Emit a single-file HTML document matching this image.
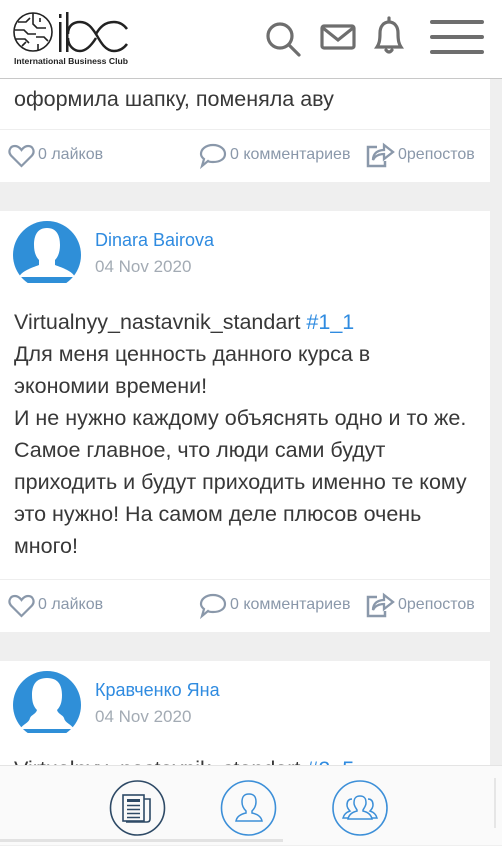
<!DOCTYPE html>
<html><head><meta charset="utf-8"><style>
*{margin:0;padding:0;box-sizing:border-box}
body{width:502px;height:845px;overflow:hidden;background:#efefef;font-family:"Liberation Sans",sans-serif;position:relative}
.hdr{position:absolute;left:0;top:0;width:502px;height:79px;background:#fff;border-bottom:1px solid #c8c8c8}
.card{position:absolute;left:0;width:490px;background:#fff}
.txt{position:absolute;left:14px;font-size:21.5px;color:#383838;line-height:32px;white-space:nowrap}
.act{position:absolute;left:0;width:490px;height:52px;border-top:1px solid #eee;font-size:16px;color:#8a98aa}
.act span{position:absolute;top:16px}
.act svg{position:absolute}
.name{position:absolute;left:95px;font-size:18px;color:#2f8be0}
.date{position:absolute;left:95px;font-size:17px;color:#a3abb4}
.av{position:absolute;left:13px;width:68px;height:62px;overflow:hidden}
.blue{color:#2f8be0}
</style></head><body>

<div class="card" style="top:79px;height:103px">
  <div class="txt" style="top:4px">оформила шапку, поменяла аву</div>
  <div class="act" style="top:50px">
    <svg style="left:8px;top:14px" width="27" height="24" viewBox="0 0 27 24"><path d="M13.5 22 L3 11.5 C0 8 1.5 2 7 2 C10 2 12 4 13.5 6 C15 4 17 2 20 2 C25.5 2 27 8 24 11.5 Z" fill="none" stroke="#8a98aa" stroke-width="2.2"/></svg>
    <span style="left:38px">0 лайков</span>
    <svg style="left:199px;top:13px" width="28" height="26" viewBox="0 0 28 26"><path d="M14 2 C21 2 26 6 26 11 C26 16 21 19 14 19 C12 19 10 19 9 18 L3 23 L5 16 C3 14.5 2 13 2 11 C2 6 7 2 14 2Z" fill="none" stroke="#8a98aa" stroke-width="2.2"/></svg>
    <span style="left:230px">0 комментариев</span>
    <svg style="left:365px;top:11px" width="30" height="28" viewBox="0 0 30 28"><path d="M12 6 H3 V25 H20 V20" fill="none" stroke="#8a98aa" stroke-width="2.5"/><path d="M8 19 C8 12 13 9 19 9 V4 L28 11 L19 18 V13 C14 13 10 15 8 19Z" fill="none" stroke="#8a98aa" stroke-width="2.3"/></svg>
    <span style="left:398px">0репостов</span>
  </div>
</div>

<div class="card" style="top:211px;height:421px">
  <div class="av" style="top:10px"><svg width="68" height="68" viewBox="0 0 68 68"><circle cx="34" cy="34" r="34" fill="#2f8fd8"/><path d="M34 7 C24 7 21 15 21 24 C21 31 23 36 26 39 V44 C18 47 9 50 6 56 L62 56 C59 50 50 47 42 44 V39 C45 36 47 31 47 24 C47 15 44 7 34 7Z" fill="#fff"/></svg></div>
  <div class="name" style="top:19px">Dinara Bairova</div>
  <div class="date" style="top:46px">04 Nov 2020</div>
  <div class="txt" style="top:95px">Virtualnyy_nastavnik_standart <span class="blue">#1_1</span><br>Для меня ценность данного курса в<br>экономии времени!<br>И не нужно каждому объяснять одно и то же.<br>Самое главное, что люди сами будут<br>приходить и будут приходить именно те кому<br>это нужно! На самом деле плюсов очень<br>много!</div>
  <div class="act" style="top:368px">
    <svg style="left:8px;top:14px" width="27" height="24" viewBox="0 0 27 24"><path d="M13.5 22 L3 11.5 C0 8 1.5 2 7 2 C10 2 12 4 13.5 6 C15 4 17 2 20 2 C25.5 2 27 8 24 11.5 Z" fill="none" stroke="#8a98aa" stroke-width="2.2"/></svg>
    <span style="left:38px">0 лайков</span>
    <svg style="left:199px;top:13px" width="28" height="26" viewBox="0 0 28 26"><path d="M14 2 C21 2 26 6 26 11 C26 16 21 19 14 19 C12 19 10 19 9 18 L3 23 L5 16 C3 14.5 2 13 2 11 C2 6 7 2 14 2Z" fill="none" stroke="#8a98aa" stroke-width="2.2"/></svg>
    <span style="left:230px">0 комментариев</span>
    <svg style="left:365px;top:11px" width="30" height="28" viewBox="0 0 30 28"><path d="M12 6 H3 V25 H20 V20" fill="none" stroke="#8a98aa" stroke-width="2.5"/><path d="M8 19 C8 12 13 9 19 9 V4 L28 11 L19 18 V13 C14 13 10 15 8 19Z" fill="none" stroke="#8a98aa" stroke-width="2.3"/></svg>
    <span style="left:398px">0репостов</span>
  </div>
</div>

<div class="card" style="top:661px;height:120px">
  <div class="av" style="top:10px"><svg width="68" height="68" viewBox="0 0 68 68"><circle cx="34" cy="34" r="34" fill="#2f8fd8"/><path d="M34 7 C23 7 19 14 19 24 C19 32 21 36 24 39 C23 43 18 44 17 47 C16 52 10 53 7 58 L61 58 C58 53 52 52 51 47 C50 44 45 43 44 39 C47 36 49 32 49 24 C49 14 45 7 34 7Z" fill="#fff"/></svg></div>
  <div class="name" style="top:19px">Кравченко Яна</div>
  <div class="date" style="top:46px">04 Nov 2020</div>
  <div class="txt" style="top:92px">Virtualnyy_nastavnik_standart <span class="blue">#2_5</span></div>
</div>

<div style="position:absolute;left:0;top:765px;width:502px;height:80px;background:#fafafa;border-top:1px solid #e4e4e4">
  <div style="position:absolute;left:494px;top:12px;width:2px;height:50px;background:#e6e6e6"></div>
  <div style="position:absolute;left:0;top:73px;width:283px;height:3px;background:#e2e2e2"></div>
  <svg style="position:absolute;left:0;top:0" width="502" height="80" viewBox="0 765 502 80">
    <circle cx="137.5" cy="807" r="27" fill="none" stroke="#2e4a66" stroke-width="1.6"/>
    <rect x="123" y="794" width="21" height="26" fill="none" stroke="#2e4a66" stroke-width="1.6"/>
    <path d="M144 798 H150 V818 Q150 821 147 821 H126" fill="none" stroke="#2e4a66" stroke-width="1.6"/>
    <rect x="127" y="798" width="13" height="3" fill="#2e4a66"/>
    <path d="M127 804.5H140M127 808.5H140M127 812.5H140M127 816.5H140" stroke="#2e4a66" stroke-width="1.6"/>
    <circle cx="248.5" cy="807" r="27" fill="none" stroke="#3c8fd8" stroke-width="1.6"/>
    <path d="M249 793 C243 793 242 797 242 801 C242 805 244 808 246 810 V812 C241 813 237 815 236 820 H262 C261 815 257 813 252 812 V810 C254 808 256 805 256 801 C256 797 255 793 249 793Z" fill="none" stroke="#3c8fd8" stroke-width="1.5"/>
    <circle cx="360" cy="807" r="27" fill="none" stroke="#3c8fd8" stroke-width="1.6"/>
    <path d="M360 795 C355 795 354 798 354 802 C354 805 356 807 357 809 V810 C353 811 349 813 348 818 H372 C371 813 367 811 363 810 V809 C364 807 366 805 366 802 C366 798 365 795 360 795Z" fill="none" stroke="#3c8fd8" stroke-width="1.5"/>
    <path d="M352 798 C348 798 347 801 347 804 C347 807 349 809 350 810 C347 811 344 813 343 817 H348 M368 798 C372 798 373 801 373 804 C373 807 371 809 370 810 C373 811 376 813 377 817 H372" fill="none" stroke="#3c8fd8" stroke-width="1.5"/>
  </svg>
</div>

<div class="hdr">
  <svg style="position:absolute;left:0;top:0" width="140" height="75" viewBox="0 0 140 75">
    <g fill="none" stroke="#222" stroke-width="1.6">
      <circle cx="33" cy="32" r="19"/>
      <path d="M18 22 H26 L30 18 M15 30 H24 L28 34 H36 M16 39 H25 L29 43 M33 13 V24 L37 28 H46 M40 18 V22 M36 37 H44 L48 41 M38 44 V51 M22 46 L26 42"/>
    </g>
    <rect x="59" y="14" width="2.5" height="4" fill="#222"/>
    <rect x="59" y="22" width="2.5" height="30" fill="#222"/>
    <rect x="66" y="12" width="2.5" height="40" fill="#222"/>
    <path d="M68 34 C68 25 74 22 80 22 C88 22 92 28 96 34 C100 41 105 51 114 51 C120 51 124 48 127 44 M96 34 C100 27 105 22 114 22 C120 22 124 25 127 29 M68 38 C68 46 74 51 80 51 C86 51 91 46 96 38" fill="none" stroke="#222" stroke-width="2.5"/>
    <text x="14" y="64" font-family="Liberation Sans" font-weight="bold" font-size="8.6" fill="#222" textLength="114">International Business Club</text>
  </svg>
  <svg style="position:absolute;left:260px;top:15px" width="242" height="50" viewBox="0 0 242 50">
    <g fill="none" stroke="#6e6e6e" stroke-width="3.2" stroke-linecap="round">
      <circle cx="20" cy="21" r="12"/>
      <path d="M29 30 L39 40"/>
      <rect x="62" y="11" width="32" height="22" rx="2"/>
      <path d="M63 13 L78 25 L93 13"/>
      <path d="M117 32 C119 29 120 26 120 18 C120 11 124 7 129 7 C134 7 138 11 138 18 C138 26 139 29 141 32 Z"/>
      <path d="M129 3 V6"/>
      <path d="M126 35 Q129 39 132 35"/>
    </g>
    <g stroke="#6e6e6e" stroke-width="4" stroke-linecap="round">
      <path d="M172 7 H222 M172 22 H222 M172 37 H222"/>
    </g>
  </svg>
</div>
</body></html>
